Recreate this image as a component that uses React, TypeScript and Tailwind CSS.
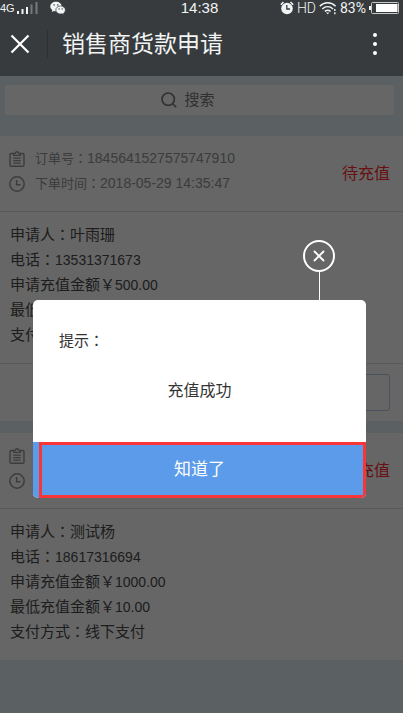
import { ReactNode } from "react";
import { X } from "lucide-react";

const orders = [
    {
        id: "1845641527575747910",
        time: "2018-05-29 14:35:47",
        name: "叶雨珊",
        phone: "13531371673",
        amount: "500.00",
        minimum: "10.00",
        cancellable: true,
    },
    {
        id: "1845641527575747911",
        time: "2018-05-29 14:30:12",
        name: "测试杨",
        phone: "18617316694",
        amount: "1000.00",
        minimum: "10.00",
        cancellable: false,
    },
];

// full-width colon, centred in its box
function Colon() {
    return <span className="font-['Noto_Sans_CJK_TC',sans-serif] leading-none">：</span>;
}

function Num({ children }: { children: ReactNode }) {
    return <span className="text-[14px] leading-none">{children}</span>;
}

function ClipboardIcon() {
    return (
        <svg viewBox="0 0 16 16" className="size-4" fill="none" stroke="currentColor" strokeWidth="1.4">
            <path d="M4.5 2.5H2.200Q1 2.500 1 3.700V14.100Q1 15.300 2.200 15.300H13.800Q15 15.300 15 14.100V3.700Q15 2.500 13.800 2.500H11.500" />
            <path d="M4.7 4.4V2.4h1.600C6.600 1.200 7.200.8 8 .8s1.400.4 1.700 1.600h1.600v2z" />
            <path d="M4.300 7.200h7.400M4.300 9.700h7.400M4.300 12.200h7.400" strokeWidth="1.200" />
        </svg>
    );
}

function ClockIcon() {
    return (
        <svg viewBox="0 0 16 16" className="size-4" fill="none" stroke="currentColor" strokeWidth="1.5">
            <circle cx="8" cy="8" r="7.2" />
            <path d="M7.600 4v4.700h4" />
        </svg>
    );
}

function StatusBar() {
    return (
        <div className="relative flex h-4 items-center justify-between pr-1 text-[#f2f4f4]">
            <div className="flex items-center">
                <span className="text-[11px] leading-4">4G</span>
                <svg viewBox="0 0 22 12" className="ml-0.5 h-3 w-[22px]" fill="currentColor">
                    <path d="M0 9h2v3H0zM4.500 7h2v5h-2zM9 5h2v7H9z" />
                    <path d="M13.500 2.500h2V12h-2zM18.500 0h2v12h-2z" opacity=".35" />
                </svg>
                <svg viewBox="0 0 16 14" className="ml-[11px] h-[14px] w-4">
                    <path fill="#f2f4f4" d="M6 .8C2.800.8.3 2.900.3 5.500c0 1.500.8 2.700 2 3.600L1.800 10.900l2-1c.7.2 1.400.3 2.200.3 3.200 0 5.700-2.100 5.700-4.700S9.200.8 6 .8z" />
                    <path fill="#f2f4f4" stroke="#373b3d" strokeWidth=".7" d="M10.600 5C7.900 5 5.800 6.800 5.800 9s2.100 4 4.800 4c.6 0 1.100-.1 1.700-.2l1.700.9-.4-1.500c1.100-.8 1.800-1.900 1.800-3.200 0-2.200-2.100-4-4.800-4z" />
                    <g fill="#373b3d">
                        <circle cx="4.100" cy="4" r=".8" />
                        <circle cx="7.800" cy="4" r=".8" />
                        <circle cx="9.100" cy="7.900" r=".7" />
                        <circle cx="12.200" cy="7.900" r=".7" />
                    </g>
                </svg>
            </div>
            <span className="absolute left-1/2 -translate-x-1/2 pr-1 text-[15px] leading-4">14:38</span>
            <div className="flex items-center gap-[3px] font-['Roboto',sans-serif] text-[14px] leading-4">
                <svg viewBox="0 0 14 14" className="h-[14px] w-[14px]">
                    <circle cx="7" cy="7.500" r="5.800" fill="#f2f4f4" />
                    <path d="M.8 3.800 3.500 1M13.200 3.800 10.500 1" stroke="#f2f4f4" strokeWidth="1.500" />
                    <path d="M6.800 4v4h3.200" fill="none" stroke="#373b3d" strokeWidth="1.300" />
                </svg>
                <span className="font-light">HD</span>
                <svg viewBox="0 0 18 14" className="h-[14px] w-[18px]" fill="none" stroke="#f2f4f4" strokeWidth="1.400">
                    <path d="M.8 5.200c4.500-4.500 11.300-4.500 15.800 0M3.300 8c3.200-3 7.600-3 10.800 0M5.800 10.400c2-1.600 3.800-1.600 5.800 0" />
                    <path d="m7 11.500 1.700 1.700 1.700-1.700z" fill="#f2f4f4" stroke="none" />
                    <path d="M15.800 8v2M15.800 11.200v2" />
                </svg>
                <span>83%</span>
                <svg viewBox="0 0 30 12" className="h-3 w-[30px]" fill="none">
                    <path d="M0 4h2v4H0z" fill="#f2f4f4" />
                    <rect x="2.500" y=".5" width="27" height="11" rx="1" stroke="#c8caca" />
                    <path d="M7 2h21.500v8H7z" fill="#fff" />
                </svg>
            </div>
        </div>
    );
}

function TitleBar() {
    return (
        <div className="flex h-[60px] items-center pb-1 pl-[10px] pr-[18px] text-white">
            <button aria-label="关闭">
                <svg viewBox="0 0 20 20" className="size-5" stroke="currentColor" strokeWidth="2.200">
                    <path d="m1.500 1.500 17 17M18.500 1.500l-17 17" />
                </svg>
            </button>
            <span className="ml-[17px] h-7 w-px bg-[#2c3032]" />
            <h1 className="ml-[14px] flex-1 text-[23px] leading-8 text-[#f2f4f4]">销售商货款申请</h1>
            <button aria-label="更多" className="flex w-5 flex-col items-center gap-[5px]">
                <span className="size-1 rounded-full bg-white" />
                <span className="size-1 rounded-full bg-white" />
                <span className="size-1 rounded-full bg-white" />
            </button>
        </div>
    );
}

function OrderCard({ order }: { order: (typeof orders)[number] }) {
    return (
        <section className="mb-3 bg-white">
            <div className="flex h-[76px] items-center justify-between border-b border-[#e2e2e2] pl-[9px] pr-[13px]">
                <div className="pb-1 text-[13px] text-[#969696]">
                    <p className="flex h-[25px] items-center gap-[10px]">
                        <ClipboardIcon />
                        <span>订单号<Colon /><Num>{order.id}</Num></span>
                    </p>
                    <p className="flex h-[25px] items-center gap-[10px]">
                        <ClockIcon />
                        <span>下单时间<Colon /><Num>{order.time}</Num></span>
                    </p>
                </div>
                <span className="text-[16px] text-[#ff2a30]">待充值</span>
            </div>
            <div className="px-[10px] pb-4 pt-[10px] text-[15px] leading-[25px] text-[#4a4a4a]">
                <p>申请人<Colon />{order.name}</p>
                <p>电话<Colon /><Num>{order.phone}</Num></p>
                <p>申请充值金额￥<Num>{order.amount}</Num></p>
                <p>最低充值金额￥<Num>{order.minimum}</Num></p>
                <p>支付方式<Colon />线下支付</p>
            </div>
            {order.cancellable && (
                <div className="flex justify-end border-t border-[#e2e2e2] px-[13px] py-[10px]">
                    <button className="h-[37px] w-[90px] rounded-[3px] border border-[#b4cbe8]" aria-label="取消" />
                </div>
            )}
        </section>
    );
}

function Notice() {
    return (
        <div className="absolute inset-0 bg-black/60 pl-[33px] pr-[37px] pt-[164px]">
            <div className="flex flex-col items-end pr-[31px]">
                <button aria-label="关闭提示" className="flex size-8 items-center justify-center rounded-full border-2 border-white text-white">
                    <X size={18} strokeWidth={2.4} />
                </button>
                <span className="mr-[15px] h-7 w-px bg-white" />
            </div>
            <div role="dialog" aria-label="提示" className="overflow-hidden rounded-[5px] bg-white text-[#333]">
                <p className="px-[26px] pt-[29px] text-[15px] leading-6">提示<Colon /></p>
                <p className="pb-[39px] pt-[26px] text-center text-[16px] leading-6">充值成功</p>
                <div className="relative">
                    <button className="h-14 w-full bg-[#5b9bea] text-[17px] text-white">知道了</button>
                    <span className="pointer-events-none absolute inset-y-0 left-[6px] right-0 border-3 border-[#fa3538]" />
                </div>
            </div>
        </div>
    );
}

export default function App() {
    return (
        <div className="flex min-h-screen flex-col overflow-hidden bg-[#e4f0f8] font-['Liberation_Sans','Noto_Sans_CJK_SC',sans-serif]">
            <header className="bg-[#373b3d]">
                <StatusBar />
                <TitleBar />
            </header>
            <main className="relative flex-1">
                <div className="pb-[21px] pl-[5px] pr-[9px] pt-[9px]">
                    <label className="flex h-[30px] items-center justify-center gap-2 rounded-[2px] bg-white pr-6">
                        <svg viewBox="0 0 16 16" className="size-4" fill="none" stroke="#7a7a7a" strokeWidth="1.600">
                            <circle cx="7.200" cy="7.200" r="6.200" />
                            <path d="m11.600 11.600 3.600 3.600" />
                        </svg>
                        <input aria-label="搜索" placeholder="搜索" className="w-[30px] text-[15px] leading-6 outline-none placeholder:text-[#7a7a7a]" />
                    </label>
                </div>
                {orders.map((order) => (
                    <OrderCard key={order.id} order={order} />
                ))}
                <Notice />
            </main>
        </div>
    );
}
